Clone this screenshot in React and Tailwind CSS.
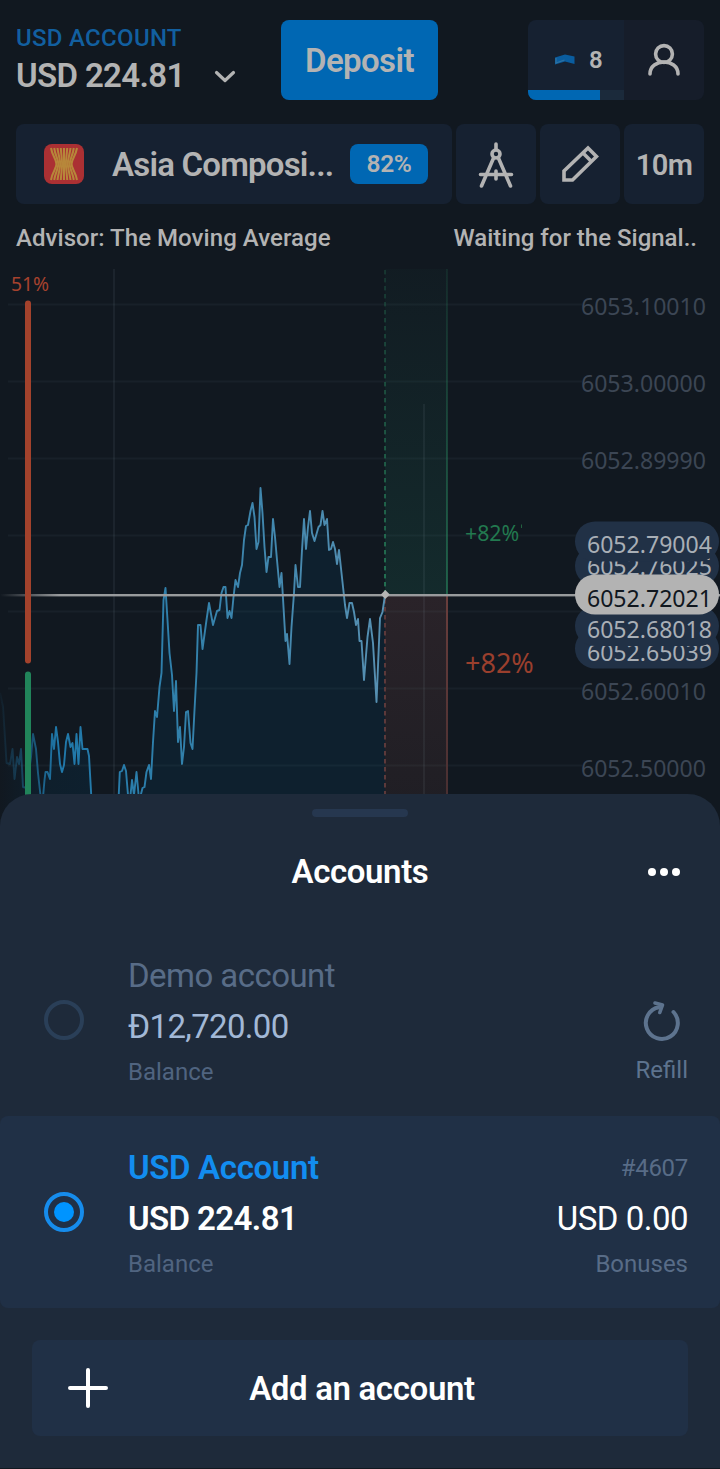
import React from 'react';

const gridRows = [304.5, 381.5, 458.5, 535.5, 611.5, 688.5, 765.5];

const priceLabels = [
  { y: 314.5, text: '6053.10010' },
  { y: 391.5, text: '6053.00000' },
  { y: 468.5, text: '6052.89990' },
  { y: 699.5, text: '6052.60010' },
  { y: 776.5, text: '6052.50000' }
];

// Later pills are drawn over the earlier ones
const pricePills = [
  { top: 546, base: 575, text: '6052.76025' },
  { top: 628.5, base: 660.5, text: '6052.65039' },
  { top: 521.5, base: 552.5, text: '6052.79004' },
  { top: 606, base: 637.5, text: '6052.68018' },
  { top: 574.5, base: 606.5, text: '6052.72021', active: true }
];

const leftLine =
  '0,693 3,707 6.5,763 10,764 12.5,749 14.5,779 17,757 19,764 21,749 23,787 27,788 31,757 33,734 36,749 38,773 41,800 43,797 44.5,780 45.5,772 47.5,772 50,779 52,734 54,749 56,727 58,742 60,764 62,772 64,765 66,742 68,734 70.5,747 72.5,743 74.5,764 76.5,734 78.5,764 80.5,727 82.5,749 87.5,749 89,756 91.5,800';

const rightLine =
  '118.5,800 119.8,772 122,771 124,765 126,771 128,795 130,800 132,780 134,795 136.5,772 138.7,796 140.5,796 142.5,788 144.5,787 146.5,772 149,765 151,779 153,742 155,711 157,717 159.5,687 161.5,673 163.5,600 165.5,588 167.5,620 169.5,653 172,675 174,711 176,681 178,742 180,727 182,764 184,747 186,712 188,711 190.5,743 192.5,749 194.5,710 196.5,673 198,625 200.5,625 202.5,649 206.5,620 209,603 213,625 217,611 219.5,610 221.5,593 223.5,587 225.5,587 227.5,618 229.5,611 231.5,618 233.5,597 235.5,580 238,587 240,573 242,565 244,540 246,526 248,525 250.5,511 252.5,503 254.5,517 256.5,549 258.5,542 260.5,488 262.5,513 264.5,547 266.5,572 268.5,557 271,557 273,519 275,537 277,560 279.5,587 281.5,573 283.5,607 285.5,641 287,634 289.5,664 291.5,627 294,593 295.5,565 298,587 300,587 302,550 304,519 306,549 308,527 310,511 312,533 314.5,541 318.5,527 320.5,525 322.5,511 324.5,525 327,519 329,550 331,549 333,542 335,549 337,564 339,550 341.5,573 345,605 347,618 349.5,603 352,603 354,612 356,625 358,619 359.5,641 361.5,641 364,680 367.5,637 370,619 373,643 376.5,702 380,618 382.5,612 384,602 385,595';

const Chart = () => (
  <svg
    viewBox="0 265 720 555"
    className="w-full h-[555px] shrink-0 font-['Noto_Sans',sans-serif]"
  >
    <defs>
      <linearGradient id="line" gradientUnits="userSpaceOnUse" x1="0" y1="0" x2="385" y2="0">
        <stop offset="0" stopColor="#1f6f9b" stopOpacity="0.05" />
        <stop offset="0.02" stopColor="#1f6f9b" stopOpacity="0.25" />
        <stop offset="0.15" stopColor="#1f78aa" />
        <stop offset="0.5" stopColor="#3381ab" />
        <stop offset="1" stopColor="#5790b2" />
      </linearGradient>
      <linearGradient id="area" x1="0" y1="0" x2="1" y2="0">
        <stop offset="0" stopColor="#0e202e" stopOpacity="0" />
        <stop offset="0.4" stopColor="#0e202e" stopOpacity="0.8" />
        <stop offset="1" stopColor="#0e202e" />
      </linearGradient>
      <linearGradient id="up" x1="0" y1="0" x2="0" y2="1">
        <stop offset="0" stopColor="#1f7a60" stopOpacity="0.04" />
        <stop offset="1" stopColor="#1f7a60" stopOpacity="0.19" />
      </linearGradient>
      <linearGradient id="upEdge" gradientUnits="userSpaceOnUse" x1="0" y1="269" x2="0" y2="595">
        <stop offset="0" stopColor="#27835c" stopOpacity="0.15" />
        <stop offset="1" stopColor="#27835c" stopOpacity="0.65" />
      </linearGradient>
      <linearGradient id="down" x1="0" y1="0" x2="0" y2="1">
        <stop offset="0" stopColor="#2a2329" />
        <stop offset="1" stopColor="#1f1e24" />
      </linearGradient>
      <linearGradient id="downEdge" gradientUnits="userSpaceOnUse" x1="0" y1="595" x2="0" y2="800">
        <stop offset="0" stopColor="#6a3e3c" />
        <stop offset="1" stopColor="#482f31" />
      </linearGradient>
      <linearGradient id="price" gradientUnits="userSpaceOnUse" x1="0" y1="0" x2="60" y2="0">
        <stop offset="0" stopColor="#999b9d" stopOpacity="0" />
        <stop offset="1" stopColor="#999b9d" />
      </linearGradient>
    </defs>

    {/* Chart area */}
    <polygon points={`${leftLine} 0,820`} fill="url(#area)" />
    <polygon points={`${rightLine} 385,820 118.5,820`} fill="#0e202e" />

    {/* Expiration zone */}
    <rect x="385" y="269" width="62" height="326" fill="url(#up)" />
    <rect x="385" y="595" width="62" height="220" fill="url(#down)" />

    {/* Grid */}
    {gridRows.map((y) => (
      <line key={y} x1="8" x2="582" y1={y} y2={y} stroke="#8fa3b5" strokeOpacity="0.06" strokeWidth="2" />
    ))}
    <line x1="114" x2="114" y1="269" y2="820" stroke="#8fa3b5" strokeOpacity="0.09" strokeWidth="2" />
    <line x1="424" x2="424" y1="404" y2="820" stroke="#8fa3b5" strokeOpacity="0.09" strokeWidth="2" />

    {/* Zone borders */}
    {Array.from({ length: 41 }, (_, i) => (
      <rect key={i} x="384" y={270 + i * 8} width="2" height="4.4" fill="#27835c" opacity={0.25 + i * 0.014} />
    ))}
    <line x1="385" x2="385" y1="599" y2="815" stroke="#5c393a" strokeWidth="2" strokeDasharray="4.4 3.6" />
    <rect x="446" y="269" width="2" height="326" fill="url(#upEdge)" />
    <rect x="446" y="595" width="2" height="220" fill="url(#downEdge)" />

    {/* Price line */}
    <polyline points={leftLine} fill="none" stroke="url(#line)" strokeWidth="1.9" strokeLinejoin="round" />
    <polyline points={rightLine} fill="none" stroke="url(#line)" strokeWidth="1.9" strokeLinejoin="round" />
    <rect x="0" y="594" width="720" height="2.4" fill="url(#price)" />
    <path d="M385.3 590l4.5 4.5-4.5 4.5-4.5-4.5z" fill="#b5b5b5" />

    {/* Traders mood */}
    <text x="11" y="290.5" fontSize="19.3" fill="#a6422e">51%</text>
    <rect x="25" y="300.5" width="6" height="363" rx="3" fill="#a3422c" />
    <rect x="25" y="671.5" width="6" height="150" rx="3" fill="#21845a" />

    <text x="465" y="541" fontSize="21.3" fill="#22794f">+82%</text>
    <rect x="521" y="524.5" width="1" height="3.5" fill="#22603f" />
    <text x="465" y="673" fontSize="27" fill="#9a3f2d">+82%</text>

    {/* Price scale */}
    {priceLabels.map((label) => (
      <text key={label.text} x="706" y={label.y} textAnchor="end" fontSize="23.1" fill="#3c4654">
        {label.text}
      </text>
    ))}
    {pricePills.map((pill) => (
      <g key={pill.text}>
        <rect x="575" y={pill.top} width="144" height="40" rx="20" fill={pill.active ? '#b3b3b3' : '#213146'} />
        <text x="712" y={pill.base} textAnchor="end" fontSize="23.1" fill={pill.active ? '#10171f' : '#a9afb6'}>
          {pill.text}
        </text>
      </g>
    ))}
  </svg>
);

const IndexLogo = () => (
  <svg width="40" height="40" viewBox="0 0 40 40" className="shrink-0">
    <rect width="40" height="40" rx="8" fill="#ab3033" />
    <g fill="none" stroke="#b7873a" strokeWidth="2">
      <path d="M7 4C8.5 13 12.4 15 12.4 20S8.5 27 7 36" />
      <path d="M10.2 4C11.5 13 14.3 15 14.3 20S11.5 28 10.2 36" />
      <path d="M13.5 4C14.5 12 16.2 15 16.2 20S14.5 28 13.5 36" />
      <path d="M16.8 4C17.3 12 18.1 15 18.1 20S17.3 28 16.8 36" />
      <path d="M20 4V36" />
      <path d="M23.2 4C22.7 12 21.9 15 21.9 20S22.7 28 23.2 36" />
      <path d="M26.5 4C25.5 12 23.8 15 23.8 20S25.5 28 26.5 36" />
      <path d="M29.8 4C28.5 13 25.7 15 25.7 20S28.5 28 29.8 36" />
      <path d="M33 4C31.5 13 27.6 15 27.6 20S31.5 27 33 36" />
    </g>
  </svg>
);

const Header = () => (
  <header className="flex items-start h-20 pl-4 pr-4">
    <div className="w-[265px] flex items-end justify-between pr-[45px] pt-[4px]">
      <div>
        <div className="text-2xl leading-[28px] font-medium text-[#125f9f] tracking-[0.3px]">USD ACCOUNT</div>
        <div className="text-[33px] leading-[38px] mt-[5px] font-semibold tracking-[-0.65px] whitespace-nowrap text-[#b3b3b3]">USD 224.81</div>
      </div>
      <svg width="22" height="14" viewBox="0 0 22 14" className="mb-[11px]">
        <path d="M2.5 2.5L11 10.5L19.5 2.5" fill="none" stroke="#b3b3b3" strokeWidth="3.2" strokeLinecap="round" strokeLinejoin="round" />
      </svg>
    </div>
    <button className="w-[157px] h-20 rounded-lg bg-[#0067b3] text-[33px] tracking-[-0.6px] font-semibold text-[#b3b3b3] pt-0.5">
      Deposit
    </button>
    <div className="ml-auto flex h-20 w-44 rounded-lg overflow-hidden">
      <div className="w-24 bg-[#162131] flex flex-col">
        <div className="flex-1 flex items-center pt-[10px] pl-[27px] gap-[14px]">
          <svg width="20" height="11" viewBox="0 0 20 11">
            <path d="M0 3.5L10 0.5L19.5 2.5V10L10 7.5L0 10.5Z" fill="#0a5d9f" />
            <path d="M1 4V9L9.5 6" fill="none" stroke="#31729f" strokeWidth="1.2" />
          </svg>
          <span className="text-2xl font-semibold text-[#b3b3b3]">8</span>
        </div>
        <div className="h-[10px] bg-[#1b2a3b]">
          <div className="w-3/4 h-full bg-[#0067b3]" />
        </div>
      </div>
      <div className="w-20 bg-[#161d2a] flex items-center justify-center">
        <svg width="34" height="34" viewBox="0 0 34 34" fill="none" stroke="#b3b3b3" strokeWidth="3.6" strokeLinecap="round">
          <circle cx="17" cy="11" r="8.4" />
          <path d="M3 31C3 15 31 15 31 31" />
        </svg>
      </div>
    </div>
  </header>
);

const AssetBar = () => (
  <div className="flex gap-1 px-4 mt-6 h-20 text-[#b3b3b3]">
    <div className="w-[436px] rounded-lg bg-[#162131] flex items-center pl-7 pr-6">
      <IndexLogo />
      <span className="ml-7 pt-0.5 text-[33px] font-semibold tracking-[-0.8px] whitespace-nowrap">Asia Composi...</span>
      <span className="ml-auto w-[78px] h-10 rounded-lg bg-[#0067b3] text-[24.5px] tracking-[-0.4px] font-semibold flex items-center justify-center pt-0.5">82%</span>
    </div>
    <div className="w-20 rounded-lg bg-[#162131] flex items-center justify-center">
      <svg width="38" height="48" viewBox="0 0 38 48" fill="none" stroke="#b3b3b3" strokeWidth="3.6" strokeLinecap="round">
        <path d="M19 4V9M16.8 17.5L4.5 46M21.2 17.5L33.5 46M3.5 34.5H34.5M19 31V39" />
        <circle cx="19" cy="14" r="4" />
      </svg>
    </div>
    <div className="w-20 rounded-lg bg-[#162131] flex items-center justify-center">
      <svg width="38" height="38" viewBox="0 0 38 38" fill="none" stroke="#b3b3b3" strokeWidth="3.6">
        <path d="M3 35V26L27 3L35.5 11.5L11.5 35Z" />
        <path d="M22 8L30.5 16.5" />
      </svg>
    </div>
    <div className="w-20 rounded-lg bg-[#162131] flex items-center justify-center pt-1 text-[29px] tracking-[-0.6px] font-semibold">10m</div>
  </div>
);

const Radio = ({ checked }) => (
  <div
    className={`size-10 rounded-full border-4 flex items-center justify-center ${
      checked ? 'border-[#168cec]' : 'border-[#2a3f58]'
    }`}
  >
    {checked && <div className="size-5 rounded-full bg-[#0094ff]" />}
  </div>
);

const AccountsSheet = () => (
  <section className="relative z-10 -mt-[26px] h-[674px] shrink-0 rounded-t-[32px] bg-[#1e2a3a] flex flex-col">
    <div className="mx-auto mt-[15px] w-24 h-2 rounded-full bg-[#26374f]" />

    <div className="grid grid-cols-3 items-center mt-[34px] h-10 px-10">
      <h2 className="col-start-2 text-center text-[33px] leading-10 tracking-[-0.4px] pt-px font-semibold text-white">Accounts</h2>
      <div className="flex justify-end gap-1">
        <span className="size-2 rounded-full bg-white" />
        <span className="size-2 rounded-full bg-white" />
        <span className="size-2 rounded-full bg-white" />
      </div>
    </div>

    {/* Demo account */}
    <div className="mt-[33px] h-[192px] flex items-center pl-11 pr-8">
      <Radio />
      <div className="ml-11 pt-[3px]">
        <div className="text-[33px] leading-[38px] tracking-[-0.55px] text-[#586c87]">Demo account</div>
        <div className="mt-[13px] text-[33px] leading-[38px] tracking-[-0.65px] text-[#a2b8d6]">Đ12,720.00</div>
        <div className="mt-[12px] text-2xl leading-[28px] text-[#506480]">Balance</div>
      </div>
      <div className="ml-auto flex flex-col items-end pt-[43px]">
        <svg width="38" height="42" viewBox="0 0 38 42" fill="none" stroke="#5d738e" strokeWidth="4" className="mr-[8px]">
          <path d="M17 7.2A16 16 0 1 0 31.5 12" strokeLinecap="round" />
          <path d="M13 3L20.5 5L17.8 12.5" strokeWidth="3.6" strokeLinecap="round" strokeLinejoin="round" />
        </svg>
        <span className="mt-[14px] text-2xl leading-[28px] text-[#5d738e]">Refill</span>
      </div>
    </div>

    {/* USD account */}
    <div className="h-[192px] rounded-lg bg-[#203046] flex items-center pl-11 pr-8">
      <Radio checked />
      <div className="ml-11 pt-[3px]">
        <div className="text-[33px] leading-[38px] tracking-[-0.35px] font-semibold text-[#128df0]">USD Account</div>
        <div className="mt-[13px] text-[33px] leading-[38px] tracking-[-0.6px] font-semibold text-white">USD 224.81</div>
        <div className="mt-[12px] text-2xl leading-[28px] text-[#506480]">Balance</div>
      </div>
      <div className="ml-auto text-right pt-[3px]">
        <div className="text-2xl leading-[38px] tracking-[-0.3px] text-[#586c87]">#4607</div>
        <div className="mt-[13px] text-[33px] leading-[38px] tracking-[-0.5px] text-white">USD 0.00</div>
        <div className="mt-[12px] text-2xl leading-[28px] text-[#586c87]">Bonuses</div>
      </div>
    </div>

    <button className="mx-8 mt-8 h-24 rounded-lg bg-[#203046] grid grid-cols-[36px_1fr_36px] items-center pl-9 pr-8 text-white">
      <svg width="40" height="40" viewBox="0 0 40 40" stroke="currentColor" strokeWidth="4" strokeLinecap="round">
        <path d="M20 2V38M2 20H38" />
      </svg>
      <span className="text-[33px] tracking-[-0.35px] pt-0.5 font-semibold">Add an account</span>
    </button>
  </section>
);

const App = () => (
  <div className="w-[720px] h-[1469px] overflow-hidden bg-[#111820] flex flex-col pt-[19.5px] font-[Roboto,sans-serif]">
    <Header />
    <AssetBar />
    <div className="flex justify-between pl-4 pr-[23px] mt-5 h-[41.5px] text-2xl leading-[28px] font-medium text-[#b3b3b3]">
      <span className="tracking-[0.05px]">Advisor: The Moving Average</span>
      <span>Waiting for the Signal..</span>
    </div>
    <Chart />
    <AccountsSheet />
  </div>
);

export default App;
